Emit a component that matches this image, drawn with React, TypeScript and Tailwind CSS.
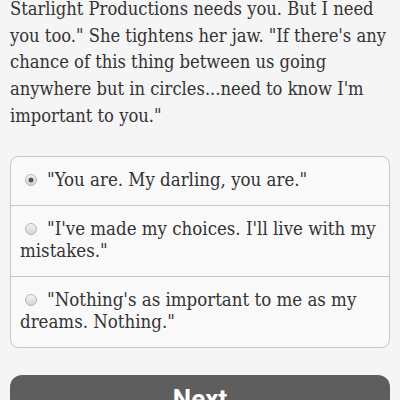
const options = [
  { text: '"You are. My darling, you are."', checked: true },
  { text: '"I\'ve made my choices. I\'ll live with my mistakes."', checked: false },
  { text: '"Nothing\'s as important to me as my dreams. Nothing."', checked: false },
]

function Radio({ checked }: { checked: boolean }) {
  return (
    <span className="inline-block align-[0px] w-[12px] h-[12px] rounded-full border border-[#b5b5b5] bg-gradient-to-b from-[#f4f4f4] to-[#d6d6d6] ml-[5px] mr-[10px] relative">
      {checked && (
        <span className="absolute left-1/2 top-1/2 -translate-x-1/2 -translate-y-1/2 w-[5px] h-[5px] rounded-full bg-[#555]" />
      )}
    </span>
  )
}

export default function App() {
  return (
    <div className="w-[400px] h-[400px] overflow-hidden bg-[#f5f5f5] px-[10px] text-[#333]">
      <p className="-mt-[4px] text-[18.2px] leading-[26.7px] font-['DejaVu_Serif',serif] font-stretch-condensed">
        Starlight Productions needs you. But I need you too." She tightens her jaw. "If there's any chance of this thing between us going anywhere but in circles...need to know I'm important to you."
      </p>

      <div className="mt-[26px] border border-[#c6c6c6] rounded-[8px] bg-[#f9f9f9]">
        {options.map((o, i) => (
          <div
            key={i}
            className={`px-[9px] pt-[12px] pb-[14px] text-[18.5px] leading-[22px] font-['DejaVu_Serif',serif] font-stretch-condensed ${i > 0 ? 'border-t border-[#c6c6c6]' : ''}`}
          >
            <Radio checked={o.checked} />
            {o.text}
          </div>
        ))}
      </div>

      <button className="mt-[27px] w-full h-[48px] rounded-[12px] bg-[#5f5e5f] text-white text-[26px] leading-[48px] font-bold font-['Roboto',sans-serif]">
        Next
      </button>
    </div>
  )
}
